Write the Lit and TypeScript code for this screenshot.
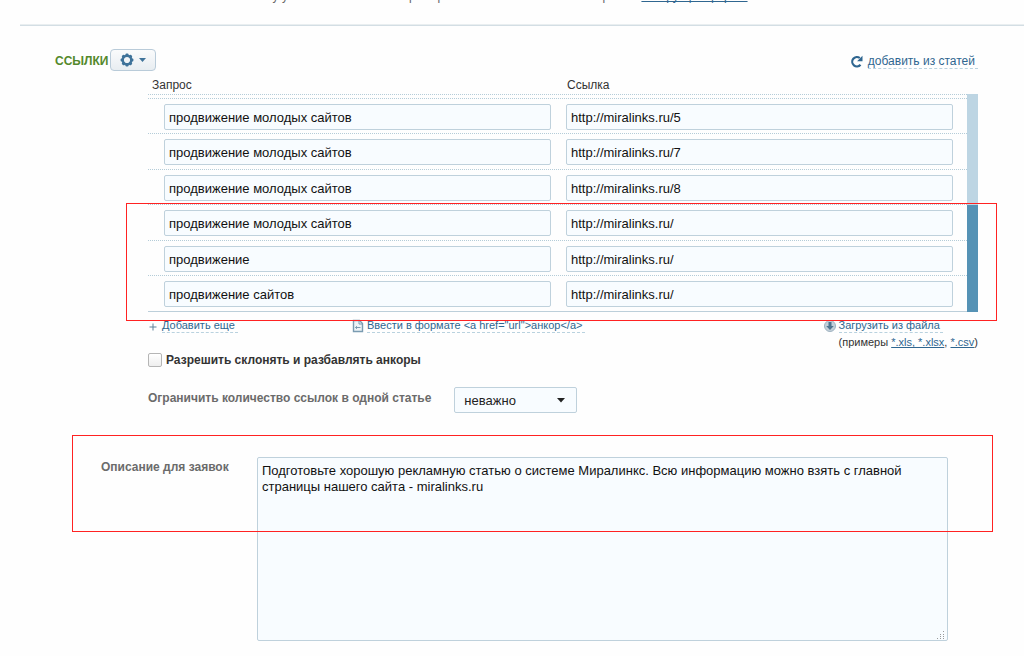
import { LitElement, html, css, svg } from "lit";
import { customElement, state } from "lit/decorators.js";

interface LinkRow {
  query: string;
  url: string;
}

const gearTeeth = [0, 45, 90, 135, 180, 225, 270, 315];

@customElement("app-root")
export class AppRoot extends LitElement {
  @state() private rows: LinkRow[] = [
    { query: "продвижение молодых сайтов", url: "http://miralinks.ru/5" },
    { query: "продвижение молодых сайтов", url: "http://miralinks.ru/7" },
    { query: "продвижение молодых сайтов", url: "http://miralinks.ru/8" },
    { query: "продвижение молодых сайтов", url: "http://miralinks.ru/" },
    { query: "продвижение", url: "http://miralinks.ru/" },
    { query: "продвижение сайтов", url: "http://miralinks.ru/" },
  ];

  static styles = css`
    :host {
      display: block;
      min-height: 100vh;
      overflow: hidden;
      background: #fefefe;
      color: #333;
      font: 12px/16px "Liberation Sans", Arial, sans-serif;
    }
    * {
      box-sizing: border-box;
    }
    a {
      color: #2f6690;
      text-decoration-skip-ink: none;
    }
    button,
    input,
    select,
    textarea {
      font-family: inherit;
      margin: 0;
    }
    .intro {
      margin: -12px 0 0 238px;
      line-height: 16px;
      white-space: nowrap;
      color: #666;
    }
    .rule {
      height: 2px;
      margin: 20px 0 0 20px;
      border: 0;
      background: linear-gradient(#e9eef0 50%, #d3dee4 50%);
    }
    .links {
      padding: 23px 46px 0 148px;
    }
    .head {
      display: flex;
      align-items: center;
      gap: 2px;
      margin-left: -93px;
    }
    h2 {
      margin: 0;
      padding-top: 2px;
      font-size: 12px;
      font-weight: bold;
      color: #54892c;
      text-transform: uppercase;
    }
    .gear {
      display: flex;
      align-items: center;
      justify-content: center;
      gap: 5px;
      width: 46px;
      height: 22px;
      padding: 0;
      border: 1px solid #b9cbd9;
      border-radius: 4px;
      background: linear-gradient(#fafbfc, #e8edf1);
    }
    .from {
      display: flex;
      gap: 4px;
      align-items: center;
      margin-left: auto;
      padding-top: 2px;
      text-decoration: none;
    }
    .dash {
      border-bottom: 1px dashed #b9d2df;
      padding-right: 3px;
      line-height: 14px;
    }
    .cols {
      display: grid;
      grid-template-columns: 1fr 1fr;
      gap: 15px;
      margin-top: 6px;
      padding: 0 11px 0 4px;
    }
    .list {
      position: relative;
      display: grid;
      grid-template-columns: 1fr 11px;
      margin-top: 1px;
    }
    .rows {
      border-top: 1px dotted #b4ccd8;
      border-bottom: 1px solid #bccfda;
      padding-top: 3px;
    }
    .row {
      display: grid;
      grid-template-columns: 1fr 1fr;
      gap: 15px;
      padding: 5px 14px 3px 16px;
      border-top: 1px dotted #b4ccd8;
    }
    .row:nth-child(even) {
      padding-bottom: 4px;
    }
    .field {
      width: 100%;
      min-width: 0;
      height: 26px;
      padding: 0 4px;
      border: 1px solid #bfd1dc;
      border-radius: 2px;
      background: #f8fcff;
      color: #111;
      font-size: 13px;
    }
    .track {
      display: flex;
      align-items: flex-end;
      background: #bdd5e3;
    }
    .thumb {
      width: 100%;
      height: 49%;
      background: #5592b5;
    }
    .mark {
      position: absolute;
      border: 1px solid #f22;
      pointer-events: none;
    }
    .mark-rows {
      inset: 109px -19px -9px -22px;
    }
    .mark-note {
      inset: 0 31px auto 72px;
      height: 97px;
    }
    .tools {
      display: grid;
      grid-template-columns: 204px 1fr auto;
      margin-top: 7px;
      font-size: 11px;
      line-height: 14px;
    }
    .tool {
      display: flex;
      align-items: flex-start;
      gap: 3px;
      text-decoration: none;
    }
    .tool .dash {
      line-height: 13px;
    }
    .plus {
      margin: 4px 2px 0 1px;
    }
    .samples {
      margin: 2px 0 0 15px;
    }
    .check {
      display: flex;
      align-items: center;
      gap: 4px;
      width: fit-content;
      margin-top: 3px;
      font-weight: bold;
    }
    .check input {
      appearance: none;
      width: 14px;
      height: 14px;
      border: 1px solid #b5b5b5;
      border-radius: 2px;
      background: linear-gradient(#fff, #eee);
    }
    .limit {
      display: flex;
      align-items: flex-start;
      gap: 23px;
      margin-top: 19px;
      font-weight: bold;
      color: #6b6b6b;
    }
    .limit label {
      padding-top: 3px;
    }
    .pick {
      position: relative;
      display: flex;
    }
    .pick select {
      appearance: none;
      width: 123px;
      height: 26px;
      padding: 0 9px;
      border: 1px solid #bfd1dc;
      border-radius: 2px;
      background: #f8fcff;
      color: #222;
      font-size: 13px;
    }
    .pick svg {
      position: absolute;
      right: 12px;
      top: 11px;
      pointer-events: none;
    }
    .note {
      position: relative;
      display: flex;
      margin-top: 22px;
      padding: 22px 76px 15px 101px;
    }
    .note label {
      width: 156px;
      flex: none;
      padding-top: 2px;
      font-weight: bold;
      color: #6b6b6b;
    }
    .area {
      position: relative;
      display: flex;
      flex: 1;
    }
    textarea {
      width: 100%;
      height: 184px;
      padding: 5px 4px;
      resize: none;
      border: 1px solid #bfd1dc;
      border-radius: 2px;
      background: #f8fcff;
      color: #111;
      font-size: 13px;
      line-height: 16px;
    }
    .grip {
      position: absolute;
      right: 3px;
      bottom: 2px;
      pointer-events: none;
    }
  `;

  render() {
    return html`
      <p class="intro">
        Помогу указать в статьях набор запросов и ссылок на ваши материалы <a href="#">инструкция формы</a>
      </p>
      <hr class="rule" />
      <section class="links">
        <div class="head">
          <h2>Ссылки</h2>
          <button class="gear" type="button" aria-label="Настройки">
            <svg width="14" height="14" viewBox="-7 -7 14 14">
              ${gearTeeth.map(
                (a) => svg`<rect x="-1.5" y="-6.4" width="3" height="3" rx="1" fill="#3f739a" transform="rotate(${a})" />`
              )}
              <circle r="4.3" fill="none" stroke="#3f739a" stroke-width="2.4" />
            </svg>
            <svg width="7" height="4" viewBox="0 0 7 4"><path d="M0 0h7L3.500 4z" fill="#3f739a" /></svg>
          </button>
          <a class="from" href="#">
            <svg width="14" height="13" viewBox="0 0 14 13">
              <path d="M10.500 9.800A4.700 4.700 0 1 1 9.800 3" fill="none" stroke="#2f6690" stroke-width="2.200" />
              <path d="M12.500 .8v5.400H7.100z" fill="#2f6690" />
            </svg>
            <span class="dash">добавить из статей</span>
          </a>
        </div>
        <div class="cols">
          <span id="query">Запрос</span>
          <span id="url">Ссылка</span>
        </div>
        <div class="list">
          <div class="rows">
            ${this.rows.map(
              (r) => html`<div class="row">
                <input class="field" type="text" aria-labelledby="query" .value=${r.query} />
                <input class="field" type="text" aria-labelledby="url" .value=${r.url} />
              </div>`
            )}
          </div>
          <div class="track"><div class="thumb"></div></div>
          <div class="mark mark-rows"></div>
        </div>
        <div class="tools">
          <a class="tool" href="#">
            <svg class="plus" width="8" height="8" viewBox="0 0 8 8">
              <path d="M4 .5v7M.5 4h7" stroke="#5d8099" />
            </svg>
            <span class="dash">Добавить еще</span>
          </a>
          <a class="tool" href="#">
            <svg width="12" height="14" viewBox="0 0 12 14">
              <path d="M1.500 1.500h6l3 3v8h-9z" fill="#edf3f7" stroke="#7a9bb1" stroke-width="1.400" />
              <path d="M7 1.500v3.500h3.500M3.500 8.500h5M3.500 8.500l1.500-1.300M3.500 8.500l1.500 1.300" fill="none" stroke="#7a9bb1" />
            </svg>
            <span class="dash">Ввести в формате &lt;a href="url"&gt;анкор&lt;/a&gt;</span>
          </a>
          <div>
            <a class="tool" href="#">
              <svg width="12" height="13" viewBox="0 0 12 13">
                <circle cx="6" cy="7" r="5.500" fill="#c3d0da" stroke="#a0b3c1" />
                <path d="M4.500 3h3v4h2.300L6 11 2.200 7h2.300z" fill="#4f7590" />
              </svg>
              <span class="dash">Загрузить из файла</span>
            </a>
            <div class="samples">(примеры <a href="#">*.xls, *.xlsx</a>, <a href="#">*.csv</a>)</div>
          </div>
        </div>
        <label class="check"><input type="checkbox" />Разрешить склонять и разбавлять анкоры</label>
        <div class="limit">
          <label for="limit">Ограничить количество ссылок в одной статье</label>
          <div class="pick">
            <select id="limit">
              <option>неважно</option>
            </select>
            <svg width="8" height="5" viewBox="0 0 8 5"><path d="M0 0h8L4 4.500z" fill="#222" /></svg>
          </div>
        </div>
      </section>
      <section class="note">
        <label for="note">Описание для заявок</label>
        <div class="area">
          <textarea id="note" .value=${"Подготовьте хорошую рекламную статью о системе Миралинкс. Всю информацию можно взять с главной страницы нашего сайта - miralinks.ru"}></textarea>
          <svg class="grip" width="9" height="9" viewBox="0 0 9 9">
            <path d="M7 1.500h1M7 4.500h1M4 4.500h1M7 6.500h1M4 6.500h1M7 8.500h1M4 8.500h1M1 8.500h1" stroke="#999" />
          </svg>
        </div>
        <div class="mark mark-note"></div>
      </section>
    `;
  }
}
